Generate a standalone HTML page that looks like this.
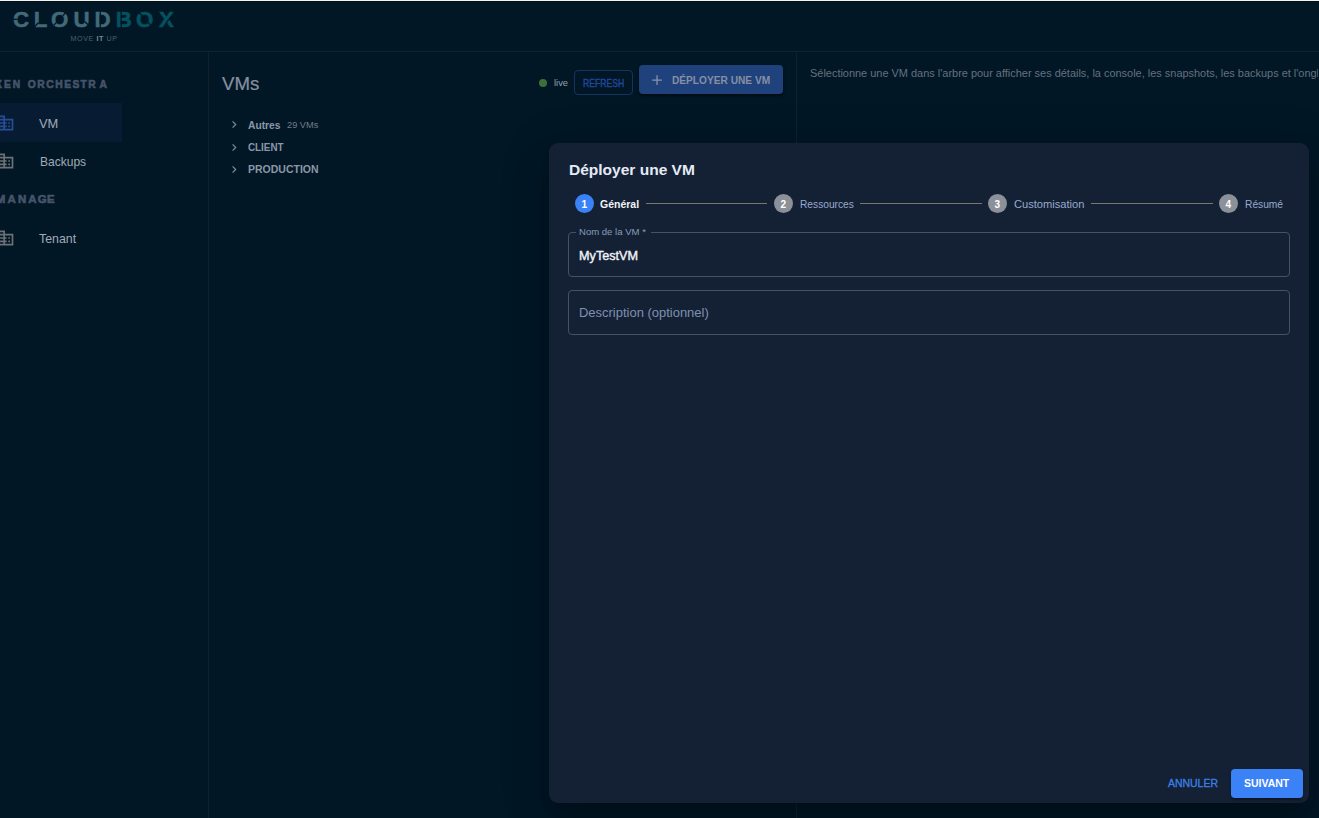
<!DOCTYPE html>
<html lang="fr">
<head>
<meta charset="utf-8">
<title>CloudBox - VMs</title>
<style>
*{box-sizing:border-box;margin:0;padding:0}
html,body{width:1319px;height:818px;overflow:hidden;background:#021726;}
body{font-family:"Liberation Sans",sans-serif;color:#9aa6b6;position:relative}
.abs{position:absolute;white-space:nowrap;line-height:1}
.t{position:absolute;white-space:nowrap;line-height:1;transform-origin:0 0}
#topline{position:absolute;left:0;top:0;width:1319px;height:1px;background:#f2f2f0}
#topline2{position:absolute;left:0;top:1px;width:1319px;height:1px;background:#010f1a}
#hdr{position:absolute;left:0;top:0;width:1319px;height:52px;border-bottom:1px solid #0f2334}
#side{position:absolute;left:0;top:52px;width:209px;height:766px;border-right:1px solid #10202f}
#mid{position:absolute;left:209px;top:52px;width:588px;height:766px;border-right:1px solid #10202f}
#sel{position:absolute;left:0;top:103px;width:122px;height:39px;background:#071c33}
#dlg{position:absolute;left:549px;top:143px;width:760px;height:660px;background:#142135;border-radius:9px;
 box-shadow:0 11px 15px -7px rgba(0,0,0,.2),0 24px 38px 3px rgba(0,0,0,.14),0 9px 46px 8px rgba(0,0,0,.12)}
.circ{position:absolute;width:19px;height:19px;border-radius:50%;background:#8b9099;top:194px}
.circ.on{background:#3b82f6}
.sline{position:absolute;height:1px;background:#77766f;top:203px}
.fld{position:absolute;left:568px;width:722px;height:45px;border:1px solid #465264;border-radius:4px}
</style>
</head>
<body>
<div id="hdr"></div>
<div id="topline"></div><div id="topline2"></div>
<div id="side"></div>
<div id="mid"></div>
<div id="sel"></div>

<!-- logo -->
<svg class="abs" style="left:0;top:0" width="200" height="52" viewBox="0 0 200 52">
 <g font-family="Liberation Sans, sans-serif" font-weight="bold" font-size="22.9" transform="scale(0.975 1)">
 <text y="27" fill="#426a79" stroke="#426a79" stroke-width="0.5" x="13.23 34.67 52.41 75.49 97.03">CLOUD</text>
 <text y="27" fill="#04525f" stroke="#04525f" stroke-width="0.5" x="118.77 139.38 163.08">BOX</text>
 </g>
 <g stroke="#021726" stroke-width="1.3" fill="none">
  <path d="M12 19.3h5.5"/>
  <path d="M34 27.5l4.5-5"/>
  <path d="M54 25l3.2-3.4M62.8 15.8l3.2-3.4"/>
  <path d="M84.5 21.5l4.5 4"/>
  <path d="M100.3 10v18"/>
  <path d="M121.2 10v18"/>
  <path d="M139 12.5l3.6 3.8M147.2 21.6l3.6 3.8"/>
  <path d="M165.5 20.6l4.2-5.6" transform="translate(1.2 1.6)"/>
 </g>
 <text x="70.6" y="41.2" font-family="Liberation Sans, sans-serif" font-size="7.1" letter-spacing="0.6" fill="#4e5f6d">MOVE <tspan font-weight="bold" fill="#7d8a94">IT</tspan> UP</text>
</svg>

<svg class="abs" style="left:-5.4px;top:112.65px" width="20" height="20" viewBox="0 0 24 24"><path fill="#274d96" d="M12 7V3H2v18h20V7H12zM10 19H4v-2h6v2zm0-4H4v-2h6v2zm0-4H4V9h6v2zm0-4H4V5h6v2zm10 12h-8v-2h2v-2h-2v-2h2v-2h-2V9h8v10zm-2-8h-2v2h2v-2zm0 4h-2v2h2v-2z"/></svg>
<svg class="abs" style="left:-5.4px;top:150.65px" width="20" height="20" viewBox="0 0 24 24"><path fill="#6b7176" d="M12 7V3H2v18h20V7H12zM10 19H4v-2h6v2zm0-4H4v-2h6v2zm0-4H4V9h6v2zm0-4H4V5h6v2zm10 12h-8v-2h2v-2h-2v-2h2v-2h-2V9h8v10zm-2-8h-2v2h2v-2zm0 4h-2v2h2v-2z"/></svg>
<svg class="abs" style="left:-5.4px;top:227.65px" width="20" height="20" viewBox="0 0 24 24"><path fill="#6b7176" d="M12 7V3H2v18h20V7H12zM10 19H4v-2h6v2zm0-4H4v-2h6v2zm0-4H4V9h6v2zm0-4H4V5h6v2zm10 12h-8v-2h2v-2h-2v-2h2v-2h-2V9h8v10zm-2-8h-2v2h2v-2zm0 4h-2v2h2v-2z"/></svg>
<svg class="abs" style="left:229px;top:118.8px" width="11" height="11" viewBox="0 0 11 11"><path d="M3.6 2.4 L6.7 5.5 L3.6 8.6" fill="none" stroke="#7f8a98" stroke-width="1.2"/></svg>
<svg class="abs" style="left:229px;top:141.7px" width="11" height="11" viewBox="0 0 11 11"><path d="M3.6 2.4 L6.7 5.5 L3.6 8.6" fill="none" stroke="#7f8a98" stroke-width="1.2"/></svg>
<svg class="abs" style="left:229px;top:163.8px" width="11" height="11" viewBox="0 0 11 11"><path d="M3.6 2.4 L6.7 5.5 L3.6 8.6" fill="none" stroke="#7f8a98" stroke-width="1.2"/></svg>

<div class="abs" style="left:538.8px;top:78.8px;width:8.3px;height:8.3px;border-radius:50%;background:#3f6e3d"></div>
<div class="abs" style="left:574px;top:70px;width:59px;height:25px;border:1px solid #15335f;border-radius:4px"></div>
<div class="abs" style="left:639px;top:65px;width:144px;height:29px;background:#1f417c;border-radius:4px;box-shadow:0 2px 3px rgba(0,0,0,.5)"></div>
<svg class="abs" style="left:651px;top:74px" width="12" height="12" viewBox="0 0 12 12"><path d="M6.05 1.2v9.7M1.2 6.05h9.7" stroke="#8b95a9" stroke-width="1.25"/></svg>

<svg class="abs" style="left:0;top:70px" width="130" height="145" viewBox="0 70 130 145">
 <g font-family="Liberation Sans, sans-serif" font-weight="bold" font-size="11.7" fill="#46546a" stroke="#46546a" stroke-width=".65">
 <text y="88" transform="scale(0.88 1)" x="-5.72 4.69 14.47 25.00 31.53 42.44 52.46 62.88 72.98 82.29 91.48 100.28 112.94">XEN ORCHESTRA</text>
 <text y="203" transform="scale(0.98 1)" x="-4.46 7.67 18.28 28.79 38.53 48.08">MANAGE</text>
 </g>
</svg>
<div id="dlg"></div>
<div class="circ on" style="left:575px"></div>
<div class="circ" style="left:774px"></div>
<div class="circ" style="left:988px"></div>
<div class="circ" style="left:1219px"></div>
<div class="sline" style="left:646px;width:121px"></div>
<div class="sline" style="left:860px;width:122px"></div>
<div class="sline" style="left:1091px;width:122px"></div>
<div class="fld" style="top:232px"></div>
<div class="abs" style="left:575.5px;top:231px;width:75px;height:3px;background:#142135"></div>
<div class="fld" style="top:290px"></div>
<div class="abs" style="left:1231px;top:769px;width:72px;height:29px;background:#3b82f6;border-radius:4px;box-shadow:0 2px 3px rgba(0,0,0,.4)"></div>

<div class="t" style="left:39.10px;top:117.00px;font-size:13px;font-weight:normal;color:#a0aab6;transform:scaleX(0.9895);">VM</div>
<div class="t" style="left:39.50px;top:155.00px;font-size:13px;font-weight:normal;color:#a0aab6;transform:scaleX(0.9240);">Backups</div>
<div class="t" style="left:39.20px;top:232.00px;font-size:13px;font-weight:normal;color:#a0aab6;transform:scaleX(0.9500);">Tenant</div>
<div class="t" style="left:221.90px;top:75.28px;font-size:18.1px;font-weight:normal;color:#8690a0;transform:scaleX(1.0306);-webkit-text-stroke:.2px #8690a0">VMs</div>
<div class="t" style="left:247.85px;top:119.93px;font-size:11.3px;font-weight:bold;color:#8b97a6;transform:scaleX(0.9056);">Autres</div>
<div class="t" style="left:286.60px;top:120.27px;font-size:9.6px;font-weight:normal;color:#717d8b;transform:scaleX(0.9606);">29 VMs</div>
<div class="t" style="left:247.85px;top:141.63px;font-size:11.3px;font-weight:bold;color:#8b97a6;transform:scaleX(0.8707);">CLIENT</div>
<div class="t" style="left:247.85px;top:163.63px;font-size:11.3px;font-weight:bold;color:#8b97a6;transform:scaleX(0.9289);">PRODUCTION</div>
<div class="t" style="left:554.20px;top:78.06px;font-size:9.5px;font-weight:normal;color:#95a0ae;transform:scaleX(0.9857);">live</div>
<div class="t" style="left:583.20px;top:78.68px;font-size:10.3px;font-weight:normal;color:#21479a;transform:scaleX(0.8360);-webkit-text-stroke:.4px #21479a">REFRESH</div>
<div class="t" style="left:672.35px;top:75.32px;font-size:11.2px;font-weight:bold;color:#878fa4;transform:scaleX(0.9074);">DÉPLOYER UNE VM</div>
<div class="t" style="left:810.20px;top:67.73px;font-size:11.3px;font-weight:normal;color:#64717f;transform:scaleX(0.9690);">Sélectionne une VM dans l'arbre pour afficher ses détails, la console, les snapshots, les backups et l'onglet avancé.</div>
<div class="t" style="left:568.95px;top:162.38px;font-size:15.5px;font-weight:bold;color:#e5ebf5;transform:scaleX(1.0008);">Déployer une VM</div>
<div class="t" style="left:600.45px;top:198.71px;font-size:11.8px;font-weight:bold;color:#f0f3f8;transform:scaleX(0.8909);">Général</div>
<div class="t" style="left:799.80px;top:198.61px;font-size:11.8px;font-weight:normal;color:#98a9cc;transform:scaleX(0.8651);">Ressources</div>
<div class="t" style="left:1013.50px;top:198.61px;font-size:11.8px;font-weight:normal;color:#98a9cc;transform:scaleX(0.9427);">Customisation</div>
<div class="t" style="left:1244.50px;top:198.61px;font-size:11.8px;font-weight:normal;color:#98a9cc;transform:scaleX(0.8659);">Résumé</div>
<div class="t" style="left:579.40px;top:227.22px;font-size:9.9px;font-weight:normal;color:#8a9bb8;transform:scaleX(0.9667);">Nom de la VM *</div>
<div class="t" style="left:579.40px;top:249.01px;font-size:13.1px;font-weight:normal;color:#f0f3f7;transform:scaleX(0.9672);-webkit-text-stroke:.4px #f0f3f7">MyTestVM</div>
<div class="t" style="left:579.40px;top:306.13px;font-size:13.2px;font-weight:normal;color:#7f90b0;transform:scaleX(0.9833);">Description (optionnel)</div>
<div class="t" style="left:1167.81px;top:777.97px;font-size:11.5px;font-weight:normal;color:#3d7fe0;transform:scaleX(0.9089);-webkit-text-stroke:.35px #3d7fe0">ANNULER</div>
<div class="t" style="left:1243.95px;top:777.97px;font-size:11.5px;font-weight:bold;color:#ffffff;transform:scaleX(0.9100);">SUIVANT</div>
<div class="t" style="left:581.50px;top:199.95px;font-size:10.1px;font-weight:bold;color:#ffffff;transform:scaleX(1.0000);">1</div>
<div class="t" style="left:780.40px;top:199.95px;font-size:10.1px;font-weight:bold;color:#ffffff;transform:scaleX(1.0000);">2</div>
<div class="t" style="left:994.40px;top:199.95px;font-size:10.1px;font-weight:bold;color:#ffffff;transform:scaleX(1.0000);">3</div>
<div class="t" style="left:1225.60px;top:199.95px;font-size:10.1px;font-weight:bold;color:#ffffff;transform:scaleX(1.0000);">4</div>
<div class="abs" style="left:1317.7px;top:64px;width:1.3px;height:20px;background:#021726"></div>
</body>
</html>
